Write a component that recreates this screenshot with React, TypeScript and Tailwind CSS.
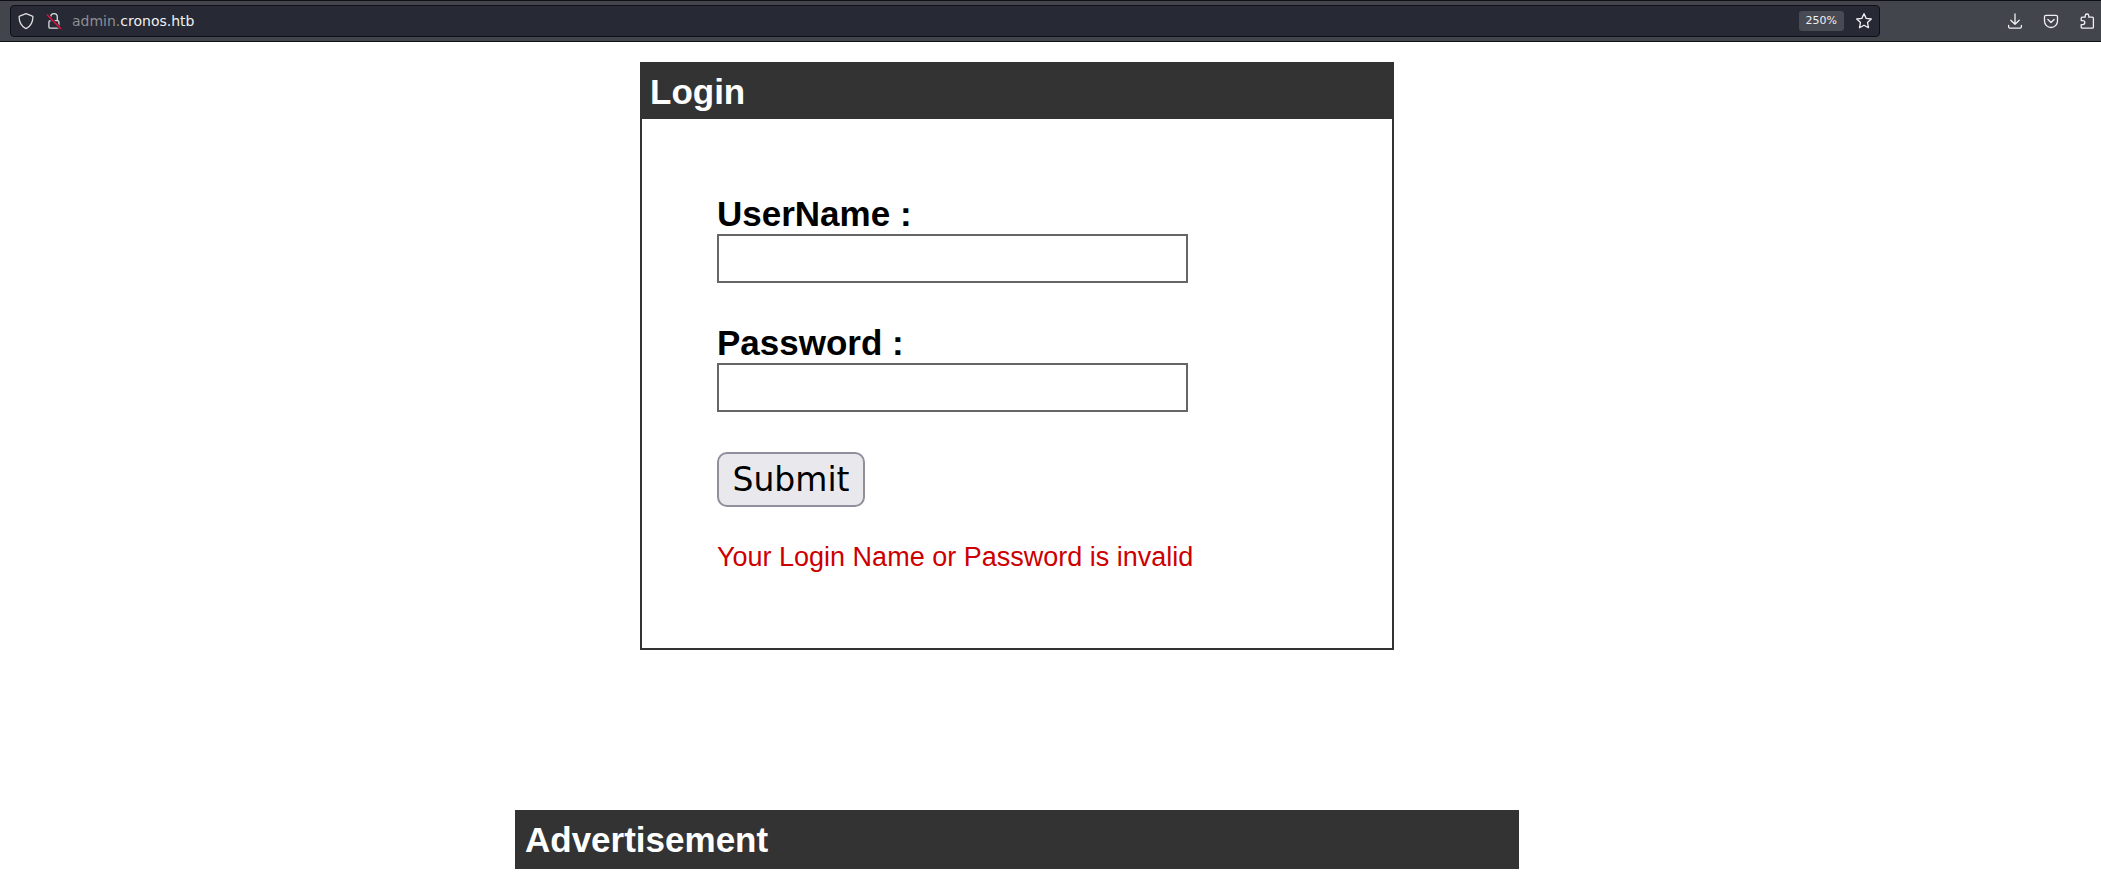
import { useState, FormEvent, ReactNode } from "react";

function Icon({ children }: { children: ReactNode }) {
  return (
    <svg
      viewBox="0 0 16 16"
      className="size-4 overflow-visible"
      fill="none"
      stroke="currentColor"
      strokeWidth="1.3"
      strokeLinecap="round"
      strokeLinejoin="round"
      aria-hidden="true"
    >
      {children}
    </svg>
  );
}

function AddressBar() {
  return (
    <header className="flex border-y border-[#0f1016] bg-[#43454d] py-1 pl-2.5 font-['DejaVu_Sans',sans-serif] text-[#f0f0f2]">
      <div className="flex h-8 flex-1 items-center rounded-[4px] border border-[#0f1016] bg-[#272934] pr-[7px] pl-[7px]">
        <button type="button" aria-label="Tracking protection" className="text-[#dcdde0]">
          <Icon>
            <path d="M8 .6 14.4 3.1c.3.1.5.4.5.7 0 5.400-2 9.300-6.400 11.500-.3.2-.7.2-1 0C3.100 13.100 1.100 9.200 1.100 3.800c0-.3.2-.6.5-.7z" />
          </Icon>
        </button>
        <button type="button" aria-label="Connection is not secure" className="ml-3 text-[#dcdde0]">
          <Icon>
            <path d="M4.700 7.600V4a3.300 3.300 0 0 1 6.600 0v3.600" />
            <rect x="2.900" y="7.600" width="10" height="7.600" rx="1.300" />
            <path d="M1.500 2.300 14.500 15.500" stroke="#272934" strokeWidth="3.200" />
            <path d="M1.300 2 14.600 15.500" stroke="#e8113f" strokeWidth="1.400" />
          </Icon>
        </button>
        <div
          role="textbox"
          aria-label="Address"
          contentEditable
          suppressContentEditableWarning
          className="ml-2.5 flex-1 text-sm text-[#f0f0f2] outline-none"
        >
          <span className="text-[#8d8e93]">admin.</span>cronos.htb
        </div>
        <button type="button" className="h-5 rounded-[3px] bg-[#484a54] px-[7px] text-[11px]">
          250%
        </button>
        <button type="button" aria-label="Bookmark this page" className="ml-3">
          <Icon>
            <path d="m8 .7 2.200 4.700 5.100.6-3.800 3.500 1 5.200L8 12.200l-4.500 2.500 1-5.200L.7 6l5.100-.6z" />
          </Icon>
        </button>
      </div>
      <div className="flex w-[221px] items-center justify-end gap-5 pr-1.5">
        <button type="button" aria-label="Downloads">
          <Icon>
            <path d="M8 .8v10.400M3.800 7.200 8 11.300l4.200-4.100M1.600 12.500v1.200c0 .8.600 1.400 1.400 1.400h10c.8 0 1.400-.6 1.400-1.400v-1.200" />
          </Icon>
        </button>
        <button type="button" aria-label="Save to Pocket">
          <Icon>
            <path d="M3 2.300h10c.9 0 1.500.6 1.500 1.500v4.200a6.500 6.500 0 0 1-13 0V3.800c0-.9.600-1.500 1.500-1.500z" />
            <path d="m4.900 6.500 3.100 3 3.100-3" />
          </Icon>
        </button>
        <button type="button" aria-label="Extensions">
          <Icon>
            <path d="M2.200 7.600V5.200c0-.6.400-1 1-1h3V2.800a1.800 1.800 0 0 1 3.600 0v1.400h3.600c.6 0 1 .4 1 1v9c0 .6-.4 1-1 1H3.200c-.6 0-1-.4-1-1v-2.600h1.600a2 2 0 0 0 0-4z" />
          </Icon>
        </button>
      </div>
    </header>
  );
}

function PanelTitle({ children }: { children: ReactNode }) {
  return (
    <h2 className="bg-[#333333] px-2 pt-2 pb-[7px] text-[35px] leading-10 font-bold text-white">
      {children}
    </h2>
  );
}

function Field({ id, label, type }: { id: string; label: string; type: string }) {
  const [value, setValue] = useState("");

  return (
    <div className="mb-10">
      <label htmlFor={id} className="block text-[35px] leading-10 font-bold">
        {label}
      </label>
      <input
        id={id}
        name={id}
        type={type}
        value={value}
        onChange={(e) => setValue(e.target.value)}
        className="block h-[49px] w-full max-w-[471px] border-2 border-[#666666] bg-white px-1 text-[33px]"
      />
    </div>
  );
}

export default function App() {
  const [error, setError] = useState("Your Login Name or Password is invalid");

  const handleSubmit = (e: FormEvent) => {
    e.preventDefault();
    setError("Your Login Name or Password is invalid");
  };

  return (
    <div className="bg-white font-['Liberation_Sans',Arial,sans-serif] text-black">
      <AddressBar />

      <main className="flex flex-col items-center pt-5 pr-[67px] pb-3">
        {/* Login panel */}
        <section className="w-full max-w-[754px] border-2 border-[#333333]">
          <PanelTitle>Login</PanelTitle>
          <form onSubmit={handleSubmit} className="p-[75px]">
            <Field id="username" label="UserName :" type="text" />
            <Field id="password" label="Password :" type="password" />
            <button
              type="submit"
              className="block h-[55px] w-[148px] rounded-[10px] border-2 border-[#8f8f9d] bg-[#e9e9ed] font-['DejaVu_Sans',sans-serif] text-[33px] leading-10"
            >
              Submit
            </button>
            <p className="mt-[34px] text-[27px] leading-8 text-[#cc0000]">{error}</p>
          </form>
        </section>

        {/* Advertisement */}
        <section className="mt-40 w-full max-w-[1004px] border-2 border-[#333333]">
          <PanelTitle>Advertisement</PanelTitle>
        </section>
      </main>
    </div>
  );
}
